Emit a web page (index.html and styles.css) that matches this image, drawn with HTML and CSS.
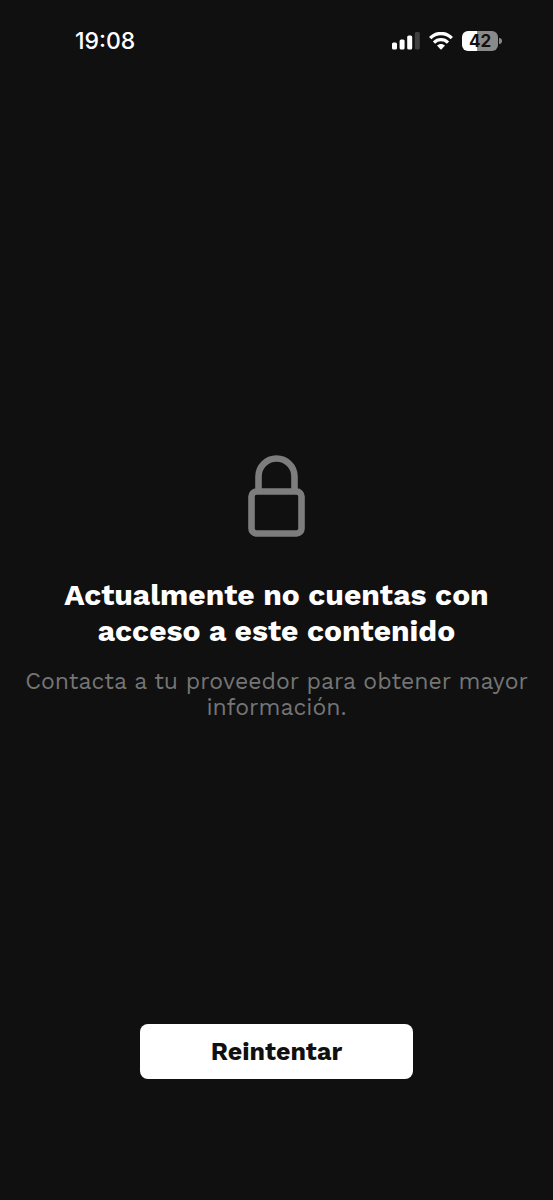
FILE: index.html
```html
<!DOCTYPE html>
<html lang="es">
<head>
<meta charset="utf-8">
<meta name="viewport" content="width=device-width, initial-scale=1">
<title>Contenido no disponible</title>
<link rel="stylesheet" href="styles.css">
</head>
<body>
<div class="screen">
  <header class="status-bar">
    <time class="clock">19:08</time>
    <div class="indicators">
      <svg class="signal" width="28" height="18" viewBox="0 0 28 18" aria-hidden="true">
        <rect x="0" y="10.5" width="5" height="7" rx="1.5" fill="#fff"/>
        <rect x="7.6" y="7.5" width="5" height="10" rx="1.5" fill="#fff"/>
        <rect x="15.2" y="3.5" width="5" height="14" rx="1.5" fill="#fff"/>
        <rect x="22.8" y="0" width="5" height="17.5" rx="1.5" fill="#404040"/>
      </svg>
      <svg class="wifi" width="24" height="18" viewBox="0 0 24 18" aria-hidden="true">
        <path d="M1.2 6.2C7-.1 17-.1 22.8 6.2" fill="none" stroke="#fff" stroke-width="3.3"/>
        <path d="M5 10.6c3.8-3.9 10.2-3.9 14 0" fill="none" stroke="#fff" stroke-width="3.2"/>
        <path d="M8 13.6c2.2-2.2 5.8-2.2 8 0L12.6 17.2q-.6.6-1.2 0z" fill="#fff"/>
      </svg>
      <div class="battery">
        <div class="battery-body">42</div>
        <div class="battery-tip"></div>
      </div>
    </div>
  </header>
  <main class="message">
    <svg class="lock" width="58" height="82" viewBox="0 0 58 82" aria-hidden="true">
      <rect x="3.5" y="36.5" width="50" height="42" rx="5" fill="none" stroke="#7d7d7d" stroke-width="6.6"/>
      <path d="M10.5 36V21.5a18 18 0 0 1 36 0V36" fill="none" stroke="#7d7d7d" stroke-width="6.6"/>
    </svg>
    <h1 class="title">Actualmente no cuentas con acceso a este contenido</h1>
    <p class="detail">Contacta a tu proveedor para obtener mayor información.</p>
  </main>
  <footer class="actions">
    <button class="retry" type="button">Reintentar</button>
  </footer>
</div>
</body>
</html>
```
FILE: styles.css
```css
* {
  box-sizing: border-box;
}

body {
  margin: 0;
  background: #101010;
  color: #fff;
  font-family: "Work Sans", Inter, "Liberation Sans", sans-serif;
}

.screen {
  display: flex;
  flex-direction: column;
  min-height: 100vh;
}

.status-bar {
  display: flex;
  align-items: center;
  justify-content: space-between;
  height: 82px;
  padding: 0 51px 0 75px;
}

.clock {
  font: 500 23px/28px Inter, "Liberation Sans", sans-serif;
}

.indicators {
  display: flex;
  align-items: center;
  gap: 9px;
}

.battery {
  display: flex;
  align-items: center;
  gap: 1px;
}

.battery-body {
  width: 36px;
  height: 20px;
  border-radius: 6px;
  background: linear-gradient(to right, #fff 42%, #8a8a8a 42%);
  color: #101010;
  font: 700 17px/20px Inter, "Liberation Sans", sans-serif;
  text-align: center;
}

.battery-tip {
  width: 3px;
  height: 6px;
  border-radius: 0 3px 3px 0;
  background: #8a8a8a;
}

.message {
  display: flex;
  flex: 1;
  flex-direction: column;
  align-items: center;
  justify-content: center;
  padding: 70px 24px 0;
  text-align: center;
}

.title {
  max-width: 460px;
  margin: 40px 0 20px;
  font-size: 30px;
  font-weight: 700;
  line-height: 36px;
}

.detail {
  margin: 0;
  color: #757575;
  font-size: 23px;
  font-weight: 400;
  line-height: 26px;
}

.actions {
  display: flex;
  justify-content: center;
  padding: 0 24px 121px;
}

.retry {
  width: 273px;
  max-width: 100%;
  height: 55px;
  border: 0;
  border-radius: 8px;
  background: #fff;
  color: #101010;
  font: inherit;
  font-size: 25px;
  font-weight: 700;
}
```
